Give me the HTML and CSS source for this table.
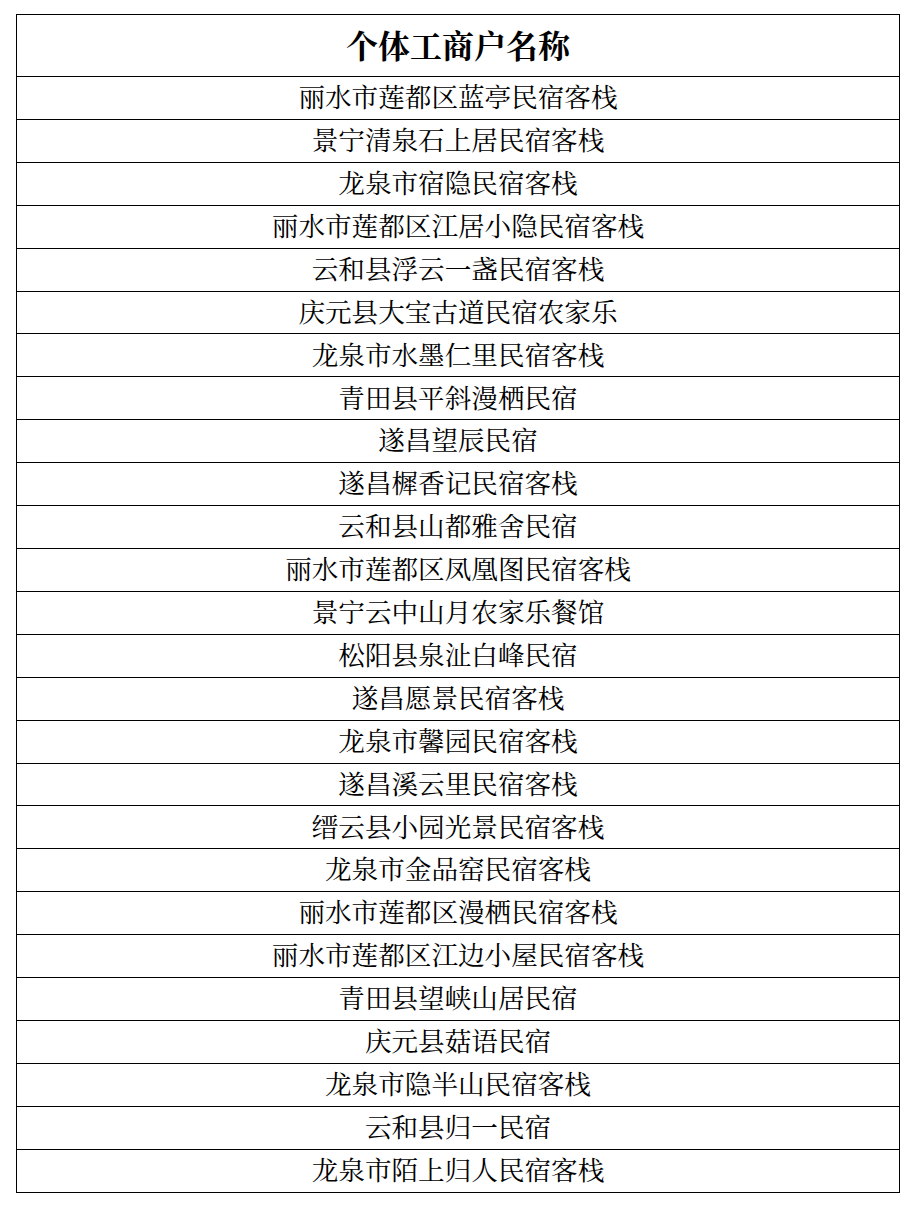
FILE: index.html
```html
<!DOCTYPE html>
<html lang="zh-CN">
<head>
<meta charset="utf-8">
<title>个体工商户名称</title>
<link rel="stylesheet" href="styles.css">
</head>
<body>
<div class="sheet">
  <div class="row head">个体工商户名称</div>
  <div class="row">丽水市莲都区蓝亭民宿客栈</div>
  <div class="row">景宁清泉石上居民宿客栈</div>
  <div class="row">龙泉市宿隐民宿客栈</div>
  <div class="row">丽水市莲都区江居小隐民宿客栈</div>
  <div class="row">云和县浮云一盏民宿客栈</div>
  <div class="row">庆元县大宝古道民宿农家乐</div>
  <div class="row">龙泉市水墨仁里民宿客栈</div>
  <div class="row">青田县平斜漫栖民宿</div>
  <div class="row">遂昌望辰民宿</div>
  <div class="row">遂昌樨香记民宿客栈</div>
  <div class="row">云和县山都雅舍民宿</div>
  <div class="row">丽水市莲都区凤凰图民宿客栈</div>
  <div class="row">景宁云中山月农家乐餐馆</div>
  <div class="row">松阳县泉沚白峰民宿</div>
  <div class="row">遂昌愿景民宿客栈</div>
  <div class="row">龙泉市馨园民宿客栈</div>
  <div class="row">遂昌溪云里民宿客栈</div>
  <div class="row">缙云县小园光景民宿客栈</div>
  <div class="row">龙泉市金品窑民宿客栈</div>
  <div class="row">丽水市莲都区漫栖民宿客栈</div>
  <div class="row">丽水市莲都区江边小屋民宿客栈</div>
  <div class="row">青田县望峡山居民宿</div>
  <div class="row">庆元县菇语民宿</div>
  <div class="row">龙泉市隐半山民宿客栈</div>
  <div class="row">云和县归一民宿</div>
  <div class="row">龙泉市陌上归人民宿客栈</div>
</div>
</body>
</html>
```
FILE: styles.css
```css
html, body {
  margin: 0;
  padding: 0;
  background: #ffffff;
}
body {
  padding: 14px 0 0 16px;
  font-family: "Noto Serif CJK SC", "Noto Sans CJK SC", "Liberation Serif", serif;
  color: #000000;
}
.sheet {
  width: 884px;
  box-sizing: border-box;
  border-left: 1px solid #000;
  border-right: 1px solid #000;
  border-bottom: 1px solid #000;
  display: flex;
  flex-direction: column;
}
.row {
  box-sizing: border-box;
  height: 42.92px;
  padding-bottom: 3px;
  border-top: 1px solid #000;
  display: flex;
  align-items: center;
  justify-content: center;
  font-size: 26.6px;
  line-height: 1;
  white-space: nowrap;
}
.row.head {
  height: 62px;
  padding-bottom: 4px;
  font-size: 32px;
  font-weight: 700;
}
```
